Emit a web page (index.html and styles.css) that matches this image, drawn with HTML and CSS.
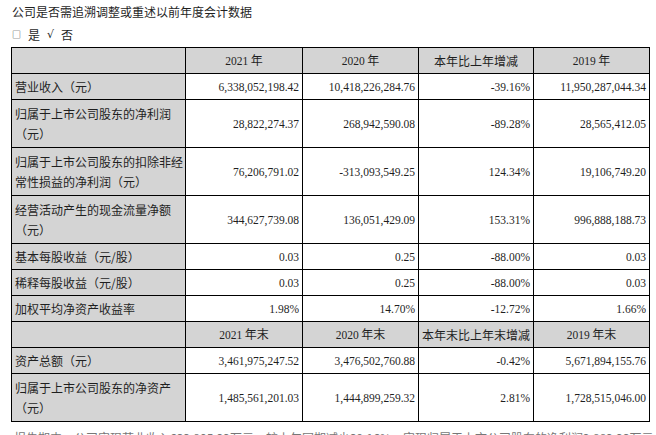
FILE: index.html
```html
<!DOCTYPE html>
<html lang="zh">
<head>
<meta charset="utf-8">
<title>会计数据</title>
<link rel="stylesheet" href="styles.css">
</head>
<body>
<div class="page">
  <p class="title">公司是否需追溯调整或重述以前年度会计数据</p>
  <p class="choice"><span class="box">□</span><span>是</span><span class="tick">√</span><span>否</span></p>
  <table class="data">
    <colgroup>
      <col class="c-label"><col class="c-a"><col class="c-b"><col class="c-c"><col class="c-d">
    </colgroup>
    <tr class="s head">
      <td></td><td class="h"><span class="n">2021</span> 年</td><td class="h"><span class="n">2020</span> 年</td><td class="h">本年比上年增减</td><td class="h"><span class="n">2019</span> 年</td>
    </tr>
    <tr class="s">
      <td class="lb">营业收入（元）</td><td class="n">6,338,052,198.42</td><td class="n">10,418,226,284.76</td><td class="n">-39.16%</td><td class="n">11,950,287,044.34</td>
    </tr>
    <tr class="d">
      <td class="lb">归属于上市公司股东的净利润<br>（元）</td><td class="n">28,822,274.37</td><td class="n">268,942,590.08</td><td class="n">-89.28%</td><td class="n">28,565,412.05</td>
    </tr>
    <tr class="d">
      <td class="lb">归属于上市公司股东的扣除非经<br>常性损益的净利润（元）</td><td class="n">76,206,791.02</td><td class="n">-313,093,549.25</td><td class="n">124.34%</td><td class="n">19,106,749.20</td>
    </tr>
    <tr class="d">
      <td class="lb">经营活动产生的现金流量净额<br>（元）</td><td class="n">344,627,739.08</td><td class="n">136,051,429.09</td><td class="n">153.31%</td><td class="n">996,888,188.73</td>
    </tr>
    <tr class="s">
      <td class="lb">基本每股收益（元/股）</td><td class="n">0.03</td><td class="n">0.25</td><td class="n">-88.00%</td><td class="n">0.03</td>
    </tr>
    <tr class="s">
      <td class="lb">稀释每股收益（元/股）</td><td class="n">0.03</td><td class="n">0.25</td><td class="n">-88.00%</td><td class="n">0.03</td>
    </tr>
    <tr class="s">
      <td class="lb">加权平均净资产收益率</td><td class="n">1.98%</td><td class="n">14.70%</td><td class="n">-12.72%</td><td class="n">1.66%</td>
    </tr>
    <tr class="s head">
      <td></td><td class="h"><span class="n">2021</span> 年末</td><td class="h"><span class="n">2020</span> 年末</td><td class="h">本年末比上年末增减</td><td class="h"><span class="n">2019</span> 年末</td>
    </tr>
    <tr class="s">
      <td class="lb">资产总额（元）</td><td class="n">3,461,975,247.52</td><td class="n">3,476,502,760.88</td><td class="n">-0.42%</td><td class="n">5,671,894,155.76</td>
    </tr>
    <tr class="d">
      <td class="lb">归属于上市公司股东的净资产<br>（元）</td><td class="n">1,485,561,201.03</td><td class="n">1,444,899,259.32</td><td class="n">2.81%</td><td class="n">1,728,515,046.00</td>
    </tr>
  </table>
  <p class="after">报告期内，公司实现营业收入633,805.22万元，较上年同期减少39.16%；实现归属于上市公司股东的净利润2,882.23万元。</p>
</div>
</body>
</html>
```

FILE: styles.css
```css
html, body {
  margin: 0;
  padding: 0;
  background: #ffffff;
}

.page {
  padding: 2px 7px 0 11px;
  font-family: "Noto Sans CJK SC", "Noto Sans", sans-serif;
  font-size: 12px;
  color: #1f1f1f;
}

.title {
  margin: 0 0 0 1px;
  line-height: 20px;
}

.choice {
  margin: 3px 0 0 1px;
  line-height: 20px;
  display: flex;
  align-items: center;
  gap: 7px;
}

.choice .box {
  font-size: 9px;
}

.choice .tick {
  font-family: "DejaVu Sans", sans-serif;
  font-size: 11px;
}

.data {
  margin-top: 2px;
  width: 638px;
  table-layout: fixed;
  border-collapse: collapse;
  border: 1px solid #000;
}

.c-label { width: 174px; }
.c-a { width: 117px; }
.c-b { width: 116px; }
.c-c { width: 115px; }
.c-d { width: 116px; }

.data td {
  border: 1px solid #000;
  padding: 0 3px;
  line-height: 20px;
  vertical-align: middle;
  white-space: nowrap;
}

.data tr.s { height: 26px; }
.data tr.d { height: 48px; }

.data tr.head td { background: #d4d4d4; }

.data td.lb {
  background: #d4d4d4;
  text-align: left;
}

.data td.h {
  text-align: center;
}

.n {
  font-family: "Liberation Serif", "Times New Roman", serif;
  font-size: 11.5px;
}

.data td.n {
  text-align: right;
}

.after {
  margin: 6px 0 0 3px;
  line-height: 20px;
  color: #777;
  white-space: nowrap;
}
```
